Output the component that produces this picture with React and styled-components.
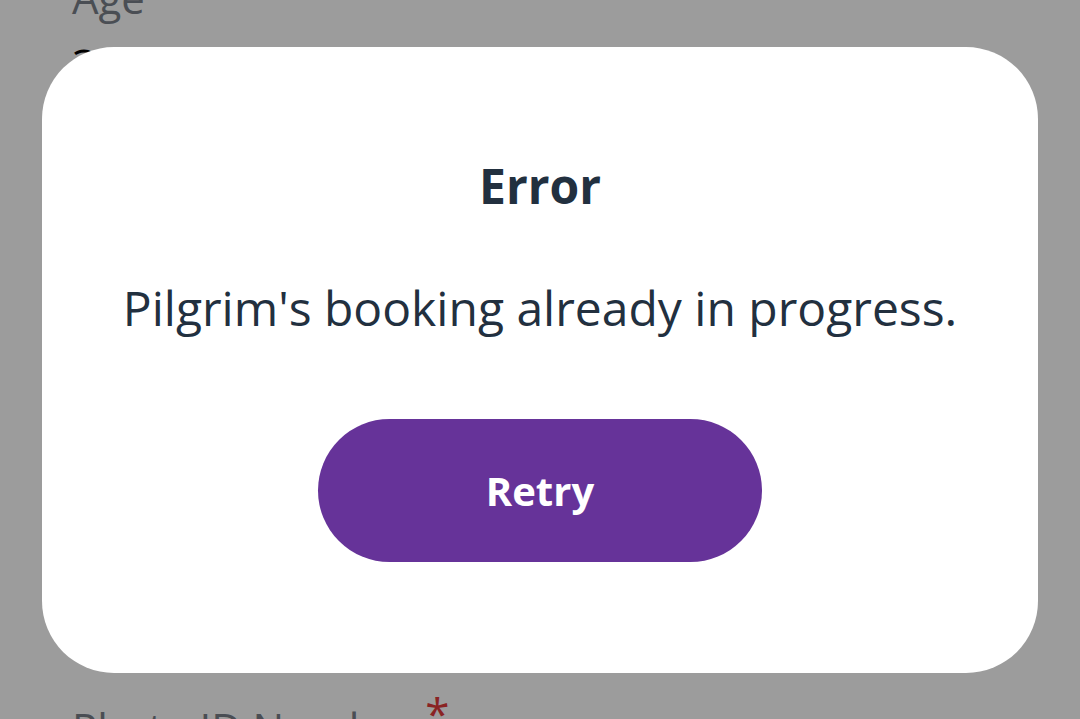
import styled, { createGlobalStyle } from 'styled-components';

const GlobalStyle = createGlobalStyle`
	html, body {
		margin: 0;
		padding: 0;
		background: #ffffff;
		font-family: 'Open Sans', 'Noto Sans', sans-serif;
		overflow: hidden;
	}
`;

const Page = styled.div`
	width: 1080px;
	height: 719px;
	overflow: hidden;
	background: #ffffff;
	padding: 0 72px;
	box-sizing: border-box;
	display: flex;
	flex-direction: column;
`;

const Field = styled.div`
	display: flex;
	flex-direction: column;
	margin-top: ${(p) => p.$top}px;
`;

const Label = styled.div`
	font-size: 42px;
	color: #7a8089;
	line-height: 60px;
	span {
		color: #e23a3a;
		margin-left: 10px;
		font-size: 44px;
		vertical-align: 14px;
	}
`;

const Value = styled.div`
	font-size: 44px;
	color: #000000;
	line-height: 60px;
	margin-top: 6px;
`;

const Overlay = styled.div`
	position: fixed;
	inset: 0;
	background: rgba(0, 0, 0, 0.39);
`;

const Dialog = styled.div`
	position: fixed;
	left: 42px;
	top: 47px;
	width: 996px;
	height: 626px;
	background: #ffffff;
	border-radius: 72px;
	display: flex;
	flex-direction: column;
	align-items: center;
	padding-top: 106px;
	box-sizing: border-box;
	color: #22303f;
`;

const Title = styled.h2`
	margin: 0;
	font-size: 48px;
	font-weight: 700;
	line-height: normal;
`;

const Message = styled.p`
	margin: 57px 0 0;
	font-size: 48px;
	font-weight: 400;
	line-height: normal;
`;

const RetryButton = styled.button`
	margin-top: 79px;
	width: 444px;
	height: 143px;
	border: none;
	border-radius: 72px;
	background: #663399;
	color: #ffffff;
	font-family: 'Open Sans', 'Noto Sans', sans-serif;
	font-size: 40px;
	font-weight: 700;
	cursor: pointer;
`;

const App = () => {
	return (
		<>
			<GlobalStyle />
			<Page>
				<Field $top={-32}>
					<Label>Age</Label>
					<Value>32</Value>
				</Field>
				<Field $top={589}>
					<Label>
						Photo ID Number<span>*</span>
					</Label>
				</Field>
			</Page>
			<Overlay />
			<Dialog>
				<Title>Error</Title>
				<Message>Pilgrim's booking already in progress.</Message>
				<RetryButton>Retry</RetryButton>
			</Dialog>
		</>
	);
};

export default App;
